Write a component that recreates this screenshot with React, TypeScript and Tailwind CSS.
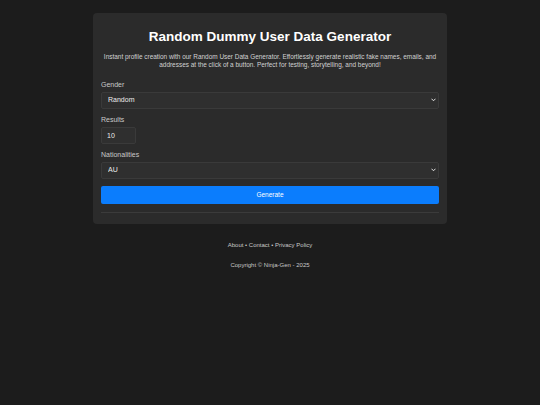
import React, { useState } from 'react';

const genders = ['Random', 'Male', 'Female'];
const nationalities = ['AU', 'BR', 'CA', 'CH', 'DE', 'DK', 'ES', 'FI', 'FR', 'GB', 'IE', 'IN', 'IR', 'MX', 'NL', 'NO', 'NZ', 'RS', 'TR', 'UA', 'US'];

function Chevron() {
  return (
    <svg
      className="pointer-events-none absolute right-[3px] top-1/2 -translate-y-1/2"
      width="5"
      height="4"
      viewBox="0 0 10 8"
      fill="none"
    >
      <path d="M1.5 2 L5 5.5 L8.5 2" stroke="#e5e5e5" strokeWidth="2" strokeLinecap="round" strokeLinejoin="round" />
    </svg>
  );
}

function SelectField({ label, value, options, onChange }: { label: string; value: string; options: string[]; onChange: (v: string) => void }) {
  return (
    <div className="flex flex-col">
      <label className="mb-[2.5px] text-[7px] leading-[8px] text-[#c9c9c9]">{label}</label>
      <div className="relative">
        <select
          value={value}
          onChange={e => onChange(e.target.value)}
          className="block h-[17.5px] w-full appearance-none rounded-[2px] border border-[#3a3a3a] bg-[#2f2f2f] px-[6px] text-[7px] leading-[8px] font-normal text-[#ececec] outline-none"
        >
          {options.map(o => (
            <option key={o} value={o}>{o}</option>
          ))}
        </select>
        <Chevron />
      </div>
    </div>
  );
}

export default function App() {
  const [gender, setGender] = useState('Random');
  const [results, setResults] = useState('10');
  const [nat, setNat] = useState('AU');

  return (
    <div
      className="min-h-[405px] w-full bg-[#1c1c1c] pt-[13px]"
      style={{ fontFamily: '"Liberation Sans", Arial, sans-serif' }}
    >
      <div className="mx-auto w-[354px] rounded-[4px] bg-[#2b2b2b] px-[8px] pt-[16px] pb-[11px]">
        <h1 className="text-center text-[13.5px] font-bold leading-[16px] text-white">
          Random Dummy User Data Generator
        </h1>
        <p className="mt-[8px] text-center text-[6.45px] leading-[8px] text-[#d2d2d2]">
          Instant profile creation with our Random User Data Generator. Effortlessly generate realistic fake names, emails,
          and addresses at the click of a button. Perfect for testing, storytelling, and beyond!
        </p>

        <form className="mt-[12px] flex flex-col gap-[7px]" onSubmit={e => e.preventDefault()}>
          <SelectField label="Gender" value={gender} options={genders} onChange={setGender} />

          <div className="flex flex-col">
            <label className="mb-[2.5px] text-[7px] leading-[8px] text-[#c9c9c9]">Results</label>
            <input
              type="text"
              value={results}
              onChange={e => setResults(e.target.value)}
              className="block h-[17.5px] w-[35px] rounded-[2px] border border-[#3a3a3a] bg-[#2f2f2f] px-[5px] text-[7px] text-[#ececec] outline-none"
            />
          </div>

          <SelectField label="Nationalities" value={nat} options={nationalities} onChange={setNat} />

          <button
            type="submit"
            className="block h-[17.5px] w-full rounded-[2px] bg-[#0b7dfd] text-[6.5px] leading-[8px] text-white"
          >
            Generate
          </button>
        </form>

        <hr className="mt-[8px] border-t border-[#3b3b3b]" />
      </div>

      <footer className="mt-[17px] text-center text-[6px] leading-[8px] text-[#c8c8c8]">
        <div>
          <a href="#">About</a> • <a href="#">Contact</a> • <a href="#">Privacy Policy</a>
        </div>
        <div className="mt-[12px]">Copyright © Ninja-Gen - 2025</div>
      </footer>
    </div>
  );
}
